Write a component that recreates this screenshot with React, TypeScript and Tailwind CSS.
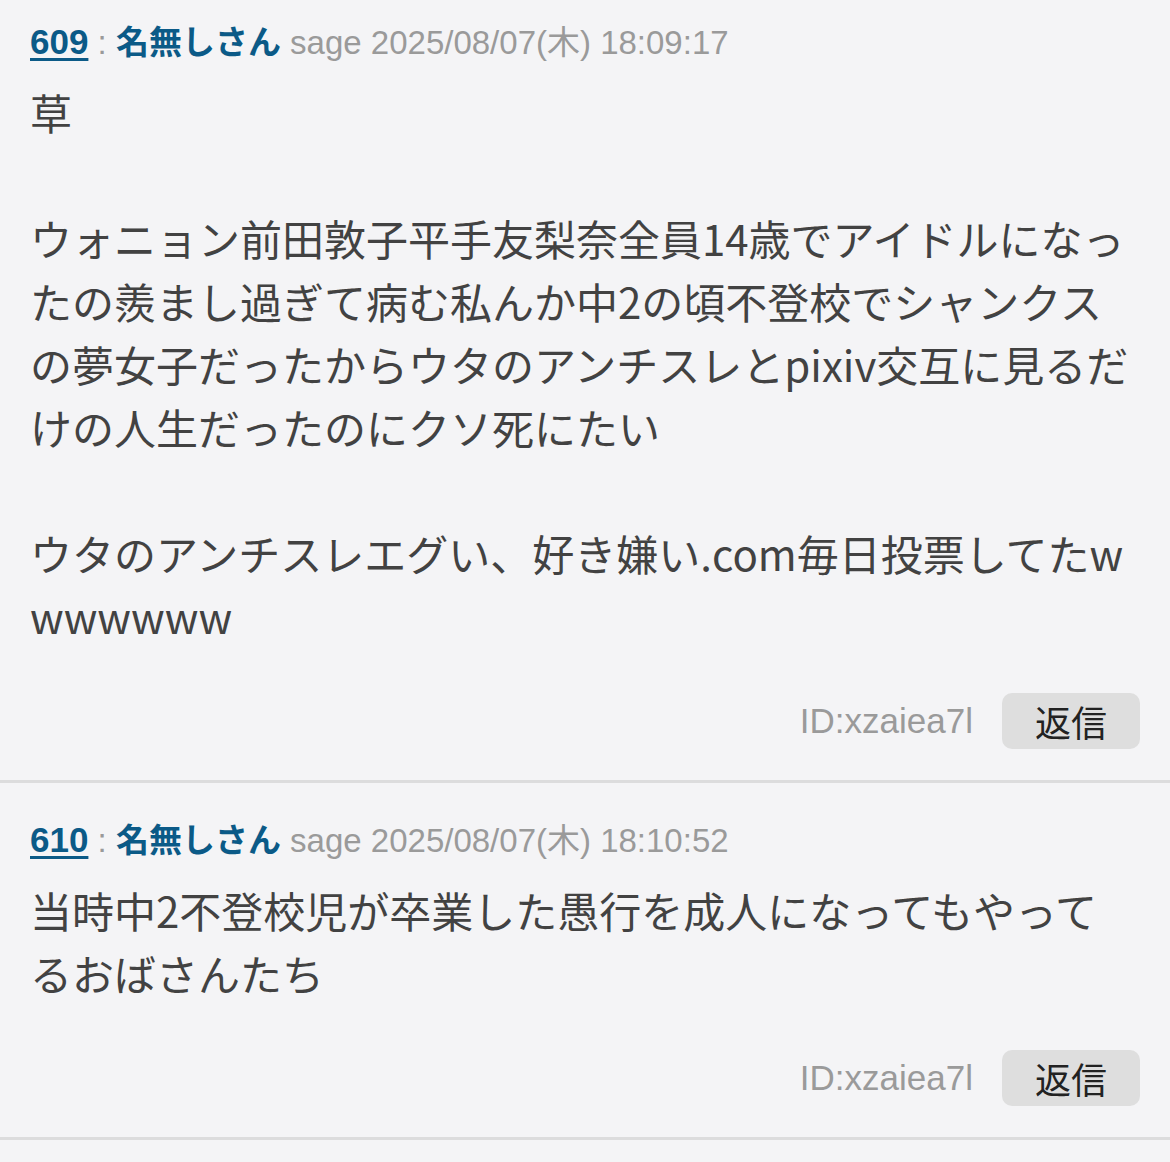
const posts = [
  {
    no: 609,
    name: "名無しさん",
    mail: "sage",
    date: "2025/08/07(木) 18:09:17",
    id: "xzaiea7l",
    body: "草\n\nウォニョン前田敦子平手友梨奈全員14歳でアイドルになったの羨まし過ぎて病む私んか中2の頃不登校でシャンクスの夢女子だったからウタのアンチスレとpixiv交互に見るだけの人生だったのにクソ死にたい\n\nウタのアンチスレエグい、好き嫌い.com毎日投票してたwwwwwww",
  },
  {
    no: 610,
    name: "名無しさん",
    mail: "sage",
    date: "2025/08/07(木) 18:10:52",
    id: "xzaiea7l",
    body: "当時中2不登校児が卒業した愚行を成人になってもやってるおばさんたち",
  },
];

const sans = "font-['Liberation_Sans','Noto_Sans_CJK_JP',sans-serif]";
const cjk = "font-['Noto_Sans_CJK_JP','Liberation_Sans',sans-serif]";

function Post({ post, first }: { post: (typeof posts)[number]; first?: boolean }) {
  return (
    <article className={`border-b-[3px] border-[#dcdcdd] pl-[30px] pr-[30px] pb-[31px] ${first ? "pt-[17px]" : "pt-[32px]"}`}>
      <div className={`${sans} text-[33px] leading-[50px] whitespace-nowrap`}>
        <a className="text-[35px] font-bold text-[#0b5a87] underline decoration-[3px] underline-offset-[4px]">{post.no}</a>
        <span className="text-[#9a9a9a]"> : </span>
        <span className="font-bold text-[#0b5a87]">{post.name}</span>
        <span className="text-[#9a9a9a]"> {post.mail} {post.date}</span>
      </div>
      <div className={`${cjk} mt-[12px] mr-[11px] whitespace-pre-wrap break-all text-[42px] leading-[63px] text-[#424242]`}>
        {post.body}
      </div>
      <div className="mt-[46px] flex items-center justify-end gap-[29px]">
        <span className={`${sans} text-[35px] text-[#9a9a9a]`}>ID:{post.id}</span>
        <button className={`${cjk} flex h-[56px] w-[138px] items-center justify-center rounded-[10px] bg-[#dedede] text-[36px] text-[#222]`}>
          返信
        </button>
      </div>
    </article>
  );
}

export default function App() {
  return (
    <div className="min-h-[1162px] bg-[#f4f4f6]">
      {posts.map((p, i) => (
        <Post key={p.no} post={p} first={i === 0} />
      ))}
    </div>
  );
}
